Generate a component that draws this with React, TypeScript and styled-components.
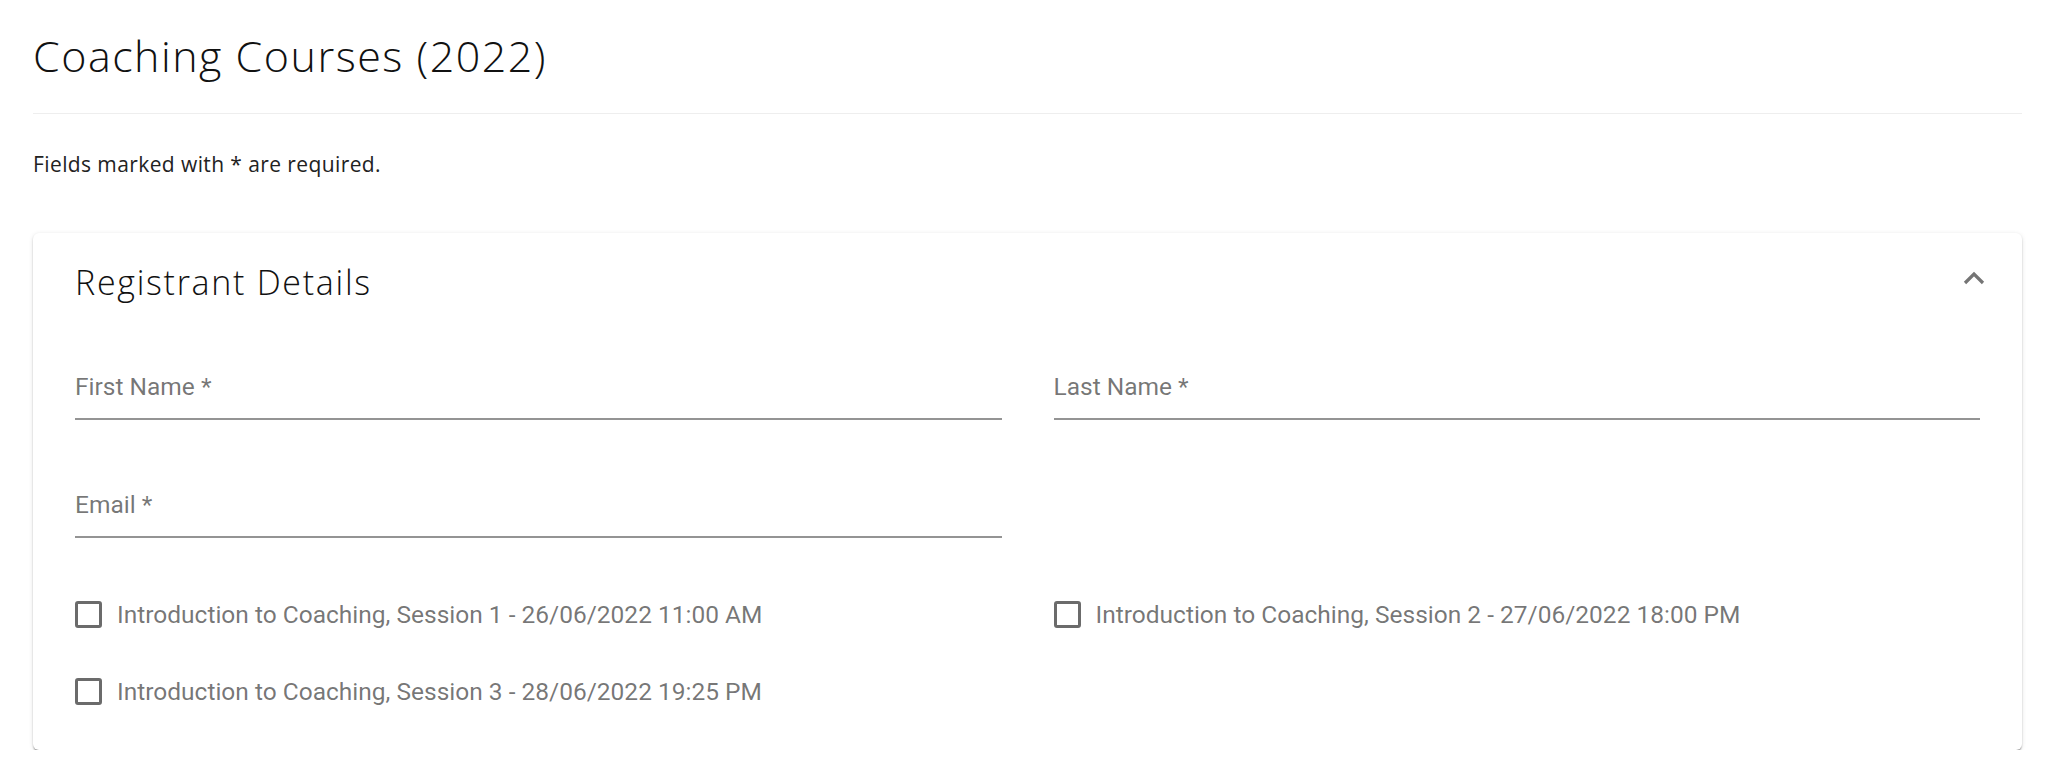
import styled, { createGlobalStyle } from 'styled-components';

const GlobalStyle = createGlobalStyle`
  body {
    margin: 0;
    background: #ffffff;
    font-family: 'Open Sans', 'Liberation Sans', sans-serif;
  }
`;

const sessions = [
  'Introduction to Coaching, Session 1 - 26/06/2022 11:00 AM',
  'Introduction to Coaching, Session 2 - 27/06/2022 18:00 PM',
  'Introduction to Coaching, Session 3 - 28/06/2022 19:25 PM',
];

function Field({ label }: { label: string }) {
  return (
    <FieldBox>
      <FieldLabel>{label}</FieldLabel>
    </FieldBox>
  );
}

function App() {
  return (
    <Page>
      <GlobalStyle />
      <Title>Coaching Courses (2022)</Title>
      <Divider />
      <Note>Fields marked with * are required.</Note>
      <Card>
        <CardHeader>
          <CardTitle>Registrant Details</CardTitle>
          <svg width='24' height='14' viewBox='0 0 24 14'>
            <path d='M3 12 L12 3 L21 12' fill='none' stroke='#757575' strokeWidth='3.2' />
          </svg>
        </CardHeader>
        <FieldGrid>
          <Field label='First Name *' />
          <Field label='Last Name *' />
          <Field label='Email *' />
        </FieldGrid>
        <CheckGrid>
          {sessions.map((s) => (
            <CheckRow key={s}>
              <Box />
              <CheckText>{s}</CheckText>
            </CheckRow>
          ))}
        </CheckGrid>
      </Card>
    </Page>
  );
}
export default App;

const Page = styled.div`
  padding: 0 34px 0 33px;
`;

const Title = styled.h1`
  margin: 32px 0 0 0;
  font-family: 'Open Sans', sans-serif;
  font-weight: 300;
  font-size: 43px;
  letter-spacing: 1.5px;
  line-height: 48px;
  color: #111111;
`;

const Divider = styled.div`
  margin-top: 33px;
  height: 1px;
  background: #eeeeee;
`;

const Note = styled.p`
  margin: 38px 0 0 0;
  font-size: 21px;
  letter-spacing: 0.4px;
  line-height: 24px;
  color: #222222;
`;

const Card = styled.section`
  margin-top: 57px;
  padding: 0 42px 38px 42px;
  background: #ffffff;
  border-radius: 6px;
  box-shadow: 0 3px 2px -1px rgba(0, 0, 0, 0.3), 0 1px 2px 0 rgba(0, 0, 0, 0.14),
    0 1px 5px 0 rgba(0, 0, 0, 0.1);
`;

const CardHeader = styled.div`
  display: flex;
  align-items: center;
  justify-content: space-between;
  padding-top: 30px;
  height: 38px;
  svg {
    margin-right: -6px;
    margin-top: -8px;
  }
`;

const CardTitle = styled.h2`
  margin: 0;
  font-weight: 300;
  font-size: 34px;
  letter-spacing: 1.7px;
  line-height: 38px;
  color: #111111;
`;

const FieldGrid = styled.div`
  display: grid;
  grid-template-columns: 1fr 1fr;
  column-gap: 52px;
  row-gap: 58px;
  margin-top: 59px;
`;

const FieldBox = styled.div`
  padding: 15px 0 19px 0;
  border-bottom: 2px solid #949494;
`;

const FieldLabel = styled.span`
  display: block;
  font-family: Roboto, sans-serif;
  font-size: 24.5px;
  line-height: 24px;
  color: rgba(0, 0, 0, 0.55);
`;

const CheckGrid = styled.div`
  display: grid;
  grid-template-columns: 1fr 1fr;
  column-gap: 52px;
  row-gap: 35px;
  margin-top: 55px;
`;

const CheckRow = styled.label`
  display: flex;
  align-items: center;
  height: 42px;
  gap: 15px;
`;

const Box = styled.span`
  width: 21px;
  height: 21px;
  border: 3px solid #6b6b6b;
  border-radius: 3px;
`;

const CheckText = styled.span`
  font-family: Roboto, sans-serif;
  font-size: 24.5px;
  color: rgba(0, 0, 0, 0.55);
`;
